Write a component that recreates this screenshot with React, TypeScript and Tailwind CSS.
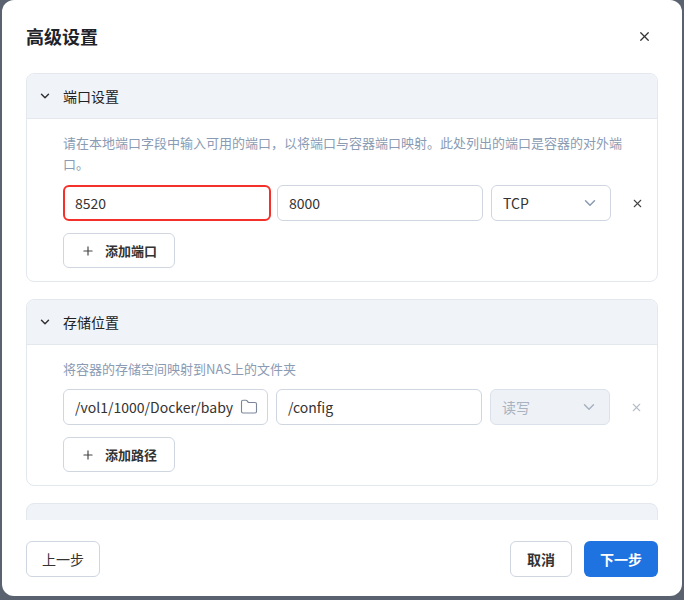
import { ChevronDown, X, Plus, Folder } from "lucide-react";

const font = { fontFamily: '"Noto Sans CJK SC", "Noto Sans", sans-serif' };

const Section = ({ title, desc, children }: { title: string; desc: string; children: React.ReactNode }) => (
  <div className="rounded-lg border border-[#e3e8ef] overflow-hidden shrink-0">
    <div className="h-[45px] bg-[#f0f3f8] border-b border-[#e3e8ef] flex items-center px-[11px] gap-[11px]">
      <ChevronDown size={14} strokeWidth={2.5} className="text-[#333]" />
      <span className="text-[14px] text-[#222]">{title}</span>
    </div>
    <div className="pl-[36px] pr-[10px] pt-[13px] pb-[13px]">
      <p className="text-[13px] leading-[21px] text-[#8a9bb3] pr-[10px]">{desc}</p>
      {children}
    </div>
  </div>
);

const AddBtn = ({ label }: { label: string }) => (
  <button className="mt-[12px] h-[35px] w-[112px] justify-center rounded-md border border-[#cfd6e0] bg-white flex items-center gap-[10px] text-[13px] font-bold text-[#333]">
    <Plus size={14} strokeWidth={2} className="text-[#444]" />
    {label}
  </button>
);

export default function App() {
  return (
    <div className="w-[684px] h-[600px] bg-[#5a6270] relative overflow-hidden" style={font}>
      <div className="absolute left-[2px] top-0 w-[680px] h-[596px] bg-white rounded-xl flex flex-col">
        <div className="flex items-center justify-between pl-[24px] pr-[30px] h-[73px] shrink-0">
          <h1 className="text-[18px] font-bold text-[#1f2329]">高级设置</h1>
          <X size={15} className="text-[#333]" />
        </div>
        <div className="h-[447px] overflow-hidden flex flex-col gap-[17px] px-[24px] shrink-0">
          <Section title="端口设置" desc="请在本地端口字段中输入可用的端口，以将端口与容器端口映射。此处列出的端口是容器的对外端口。">
            <div className="flex items-center gap-[6px] mt-[11px]">
              <div className="w-[208px] shrink-0 h-[36px] rounded-md border-2 border-[#f5302a] flex items-center px-[10px] text-[14px] text-[#333]">8520</div>
              <div className="w-[206px] shrink-0 h-[36px] rounded-md border border-[#cfd6e0] flex items-center px-[11px] text-[14px] text-[#333]">8000</div>
              <div className="ml-[2px] w-[120px] shrink-0 h-[36px] rounded-md border border-[#cfd6e0] flex items-center justify-between px-[11px] text-[14px] text-[#333]">
                TCP <ChevronDown size={18} className="text-[#8a9bb3]" />
              </div>
              <X size={13} className="ml-[14px] shrink-0 text-[#444]" />
            </div>
            <AddBtn label="添加端口" />
          </Section>
          <Section title="存储位置" desc="将容器的存储空间映射到NAS上的文件夹">
            <div className="flex items-center gap-[6px] mt-[10px]">
              <div className="w-[205px] shrink-0 h-[36px] rounded-md border border-[#cfd6e0] flex items-center pl-[11px] pr-[9px] text-[14px] text-[#333] gap-[6px]">
                <span className="flex-1 overflow-hidden whitespace-nowrap">/vol1/1000/Docker/babybuddy</span>
                <Folder size={18} strokeWidth={1.5} className="text-[#7a8799] shrink-0" />
              </div>
              <div className="ml-[2px] w-[206px] shrink-0 h-[36px] rounded-md border border-[#cfd6e0] flex items-center px-[11px] text-[14px] text-[#333]">/config</div>
              <div className="ml-[2px] w-[120px] shrink-0 h-[36px] rounded-md border border-[#dbe1ea] bg-[#eef1f6] flex items-center justify-between px-[11px] text-[14px] text-[#a8b2c0]">
                读写 <ChevronDown size={18} className="text-[#a8b2c0]" />
              </div>
              <X size={13} className="ml-[14px] shrink-0 text-[#b5bdc8]" />
            </div>
            <AddBtn label="添加路径" />
          </Section>
          <div className="h-[60px] rounded-t-lg border border-[#e3e8ef] bg-[#f0f3f8] shrink-0" />
        </div>
        <div className="flex items-center justify-between px-[24px] pt-[21px]">
          <button className="h-[36px] w-[74px] rounded-md border border-[#cfd6e0] text-[14px] text-[#333]">上一步</button>
          <div className="flex gap-[12px]">
            <button className="h-[36px] w-[62px] rounded-md border border-[#cfd6e0] text-[14px] font-bold text-[#333]">取消</button>
            <button className="h-[36px] w-[74px] rounded-md bg-[#1f73e0] text-[14px] font-bold text-white">下一步</button>
          </div>
        </div>
      </div>
    </div>
  );
}
